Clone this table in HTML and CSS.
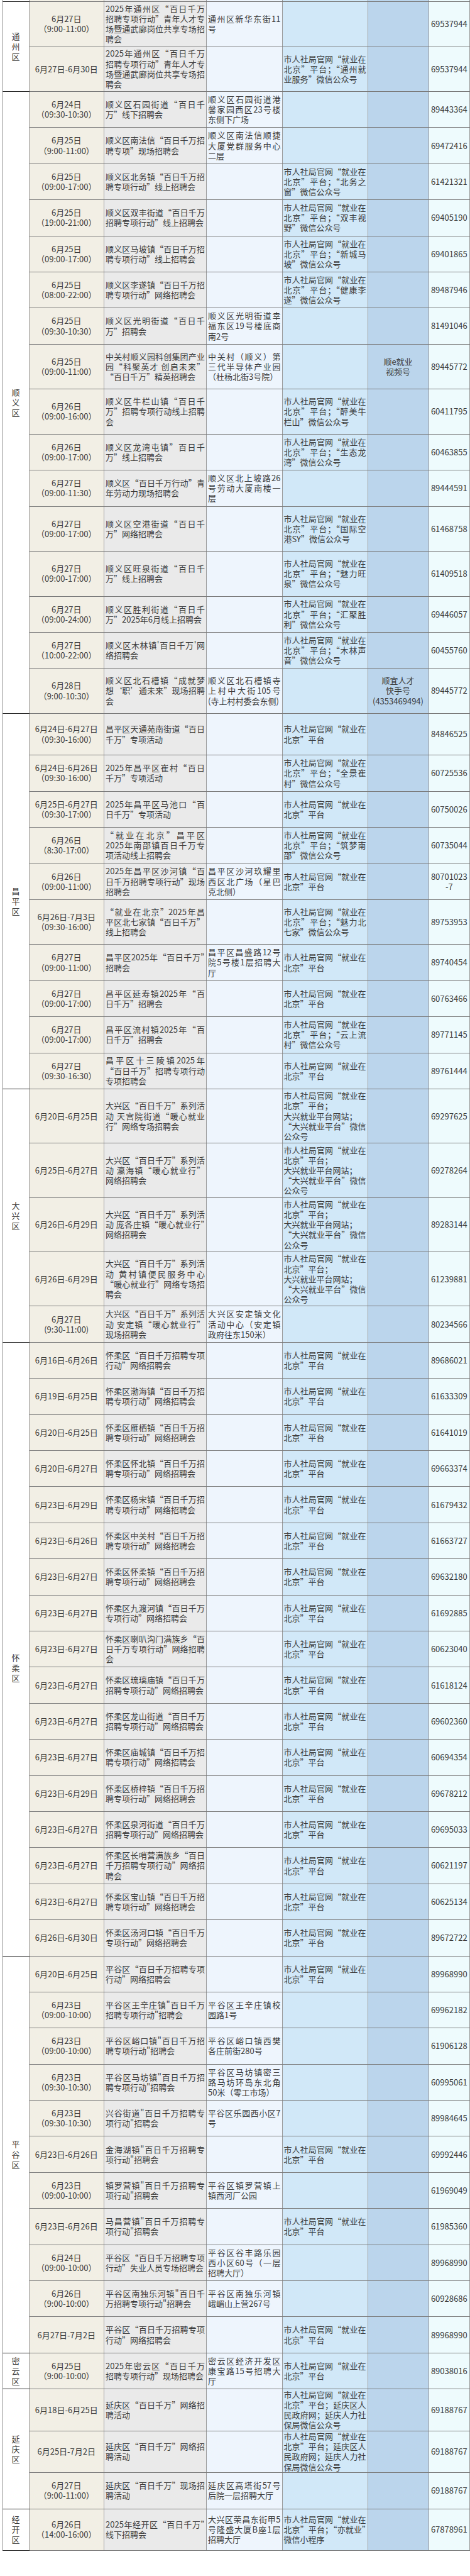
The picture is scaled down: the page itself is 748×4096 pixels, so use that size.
FILE: index.html
```html
<!DOCTYPE html>
<html lang="zh-CN">
<head>
<meta charset="utf-8">
<title>百日千万招聘专项行动</title>
<link rel="stylesheet" href="styles.css">
</head>
<body>
<table class="jobs">
<colgroup>
<col class="w-dist"><col class="w-date"><col class="w-name"><col class="w-addr"><col class="w-plat"><col class="w-vid"><col class="w-tel">
</colgroup>
<tbody>
<tr class="sliver"><td class="c-dist"></td><td class="c-date"></td><td class="c-name"></td><td class="c-addr"></td><td class="c-plat"></td><td class="c-vid"></td><td class="c-tel"></td></tr>

<!-- 通州区 -->
<tr class="r-d"><td class="c-dist" rowspan="2"><span class="vt">通州区</span></td><td class="c-date">6月27日<br>（9:00-11:00）</td><td class="c-name">2025年通州区“百日千万招聘专项行动”青年人才专场暨通武廊岗位共享专场招聘会</td><td class="c-addr">通州区新华东街11号</td><td class="c-plat"></td><td class="c-vid"></td><td class="c-tel">69537944</td></tr>
<tr class="r-d"><td class="c-date">6月27日-6月30日</td><td class="c-name">2025年通州区“百日千万招聘专项行动”青年人才专场暨通武廊岗位共享专场招聘会</td><td class="c-addr"></td><td class="c-plat">市人社局官网“就业在北京”平台；“通州就业服务”微信公众号</td><td class="c-vid"></td><td class="c-tel">69537944</td></tr>

<!-- 顺义区 -->
<tr><td class="c-dist" rowspan="16"><span class="vt">顺义区</span></td><td class="c-date">6月24日<br>（09:30-10:30）</td><td class="c-name">顺义区石园街道“百日千万”线下招聘会</td><td class="c-addr">顺义区石园街道港馨家园西区23号楼东侧下广场</td><td class="c-plat"></td><td class="c-vid"></td><td class="c-tel">89443364</td></tr>
<tr><td class="c-date">6月25日<br>（9:00-11:00）</td><td class="c-name">顺义区南法信“百日千万招聘专项”现场招聘会</td><td class="c-addr">顺义区南法信顺捷大厦党群服务中心二层</td><td class="c-plat"></td><td class="c-vid"></td><td class="c-tel">69472416</td></tr>
<tr><td class="c-date">6月25日<br>（09:00-17:00）</td><td class="c-name">顺义区北务镇“百日千万招聘专项行动”线上招聘会</td><td class="c-addr"></td><td class="c-plat">市人社局官网“就业在北京”平台；“北务之窗”微信公众号</td><td class="c-vid"></td><td class="c-tel">61421321</td></tr>
<tr><td class="c-date">6月25日<br>（19:00-21:00）</td><td class="c-name">顺义区双丰街道“百日千万招聘专项行动”线上招聘会</td><td class="c-addr"></td><td class="c-plat">市人社局官网“就业在北京”平台；“双丰视野”微信公众号</td><td class="c-vid"></td><td class="c-tel">69405190</td></tr>
<tr><td class="c-date">6月25日<br>（09:00-17:00）</td><td class="c-name">顺义区马坡镇“百日千万招聘专项行动”线上招聘会</td><td class="c-addr"></td><td class="c-plat">市人社局官网“就业在北京”平台；“新城马坡”微信公众号</td><td class="c-vid"></td><td class="c-tel">69401865</td></tr>
<tr><td class="c-date">6月25日<br>（08:00-22:00）</td><td class="c-name">顺义区李遂镇“百日千万招聘专项行动”网络招聘会</td><td class="c-addr"></td><td class="c-plat">市人社局官网“就业在北京”平台；“健康李遂”微信公众号</td><td class="c-vid"></td><td class="c-tel">89487946</td></tr>
<tr><td class="c-date">6月25日<br>（09:30-10:30）</td><td class="c-name">顺义区光明街道“百日千万”招聘会</td><td class="c-addr">顺义区光明街道幸福东区19号楼底商南2号</td><td class="c-plat"></td><td class="c-vid"></td><td class="c-tel">81491046</td></tr>
<tr class="r-d"><td class="c-date">6月25日<br>（09:00-11:00）</td><td class="c-name">中关村顺义园科创集团产业园“科聚英才 创启未来”“百日千万”精英招聘会</td><td class="c-addr">中关村（顺义）第三代半导体产业园（杜杨北街3号院）</td><td class="c-plat"></td><td class="c-vid">顺e就业<br>视频号</td><td class="c-tel">89445772</td></tr>
<tr class="r-d"><td class="c-date">6月26日<br>（09:00-16:00）</td><td class="c-name">顺义区牛栏山镇“百日千万”招聘专项行动线上招聘会</td><td class="c-addr"></td><td class="c-plat">市人社局官网“就业在北京”平台；“醉美牛栏山”微信公众号</td><td class="c-vid"></td><td class="c-tel">60411795</td></tr>
<tr><td class="c-date">6月26日<br>（09:00-17:00）</td><td class="c-name">顺义区龙湾屯镇”百日千万”线上招聘会</td><td class="c-addr"></td><td class="c-plat">市人社局官网“就业在北京”平台；“生态龙湾”微信公众号</td><td class="c-vid"></td><td class="c-tel">60463855</td></tr>
<tr><td class="c-date">6月27日<br>（09:00-11:30）</td><td class="c-name">顺义区“百日千万行动”青年劳动力现场招聘会</td><td class="c-addr">顺义区北上坡路26号劳动大厦南楼一层</td><td class="c-plat"></td><td class="c-vid"></td><td class="c-tel">89444591</td></tr>
<tr class="r-d"><td class="c-date">6月27日<br>（09:00-17:00）</td><td class="c-name">顺义区空港街道“百日千万”网络招聘会</td><td class="c-addr"></td><td class="c-plat">市人社局官网“就业在北京”平台；“国际空港SY”微信公众号</td><td class="c-vid"></td><td class="c-tel">61468758</td></tr>
<tr class="r-d"><td class="c-date">6月27日<br>（09:00-17:00）</td><td class="c-name">顺义区旺泉街道“百日千万”线上招聘会</td><td class="c-addr"></td><td class="c-plat">市人社局官网“就业在北京”平台；“魅力旺泉”微信公众号</td><td class="c-vid"></td><td class="c-tel">61409518</td></tr>
<tr><td class="c-date">6月27日<br>（09:00-24:00）</td><td class="c-name">顺义区胜利街道“百日千万”2025年6月线上招聘会</td><td class="c-addr"></td><td class="c-plat">市人社局官网“就业在北京”平台；“汇聚胜利”微信公众号</td><td class="c-vid"></td><td class="c-tel">69446057</td></tr>
<tr><td class="c-date">6月27日<br>（10:00-22:00）</td><td class="c-name">顺义区木林镇'百日千万'网络招聘会</td><td class="c-addr"></td><td class="c-plat">市人社局官网“就业在北京”平台；“木林声音”微信公众号</td><td class="c-vid"></td><td class="c-tel">60455760</td></tr>
<tr class="r-d"><td class="c-date">6月28日<br>（9:00-10:30）</td><td class="c-name">顺义区北石槽镇“成就梦想‘职’通未来”现场招聘会</td><td class="c-addr">顺义区北石槽镇寺上村中大街105号(寺上村村委会东侧)</td><td class="c-plat"></td><td class="c-vid">顺宜人才<br>快手号<br>(4353469494)</td><td class="c-tel">89445772</td></tr>

<!-- 昌平区 -->
<tr class="r-b"><td class="c-dist" rowspan="10"><span class="vt">昌平区</span></td><td class="c-date">6月24日-6月27日<br>（09:30-16:00）</td><td class="c-name">昌平区天通苑南街道“百日千万”专项活动</td><td class="c-addr"></td><td class="c-plat">市人社局官网“就业在北京”平台</td><td class="c-vid"></td><td class="c-tel">84846525</td></tr>
<tr><td class="c-date">6月24日-6月26日<br>（09:30-16:00）</td><td class="c-name">2025年昌平区崔村“百日千万”专项活动</td><td class="c-addr"></td><td class="c-plat">市人社局官网“就业在北京”平台；“全景崔村”微信公众号</td><td class="c-vid"></td><td class="c-tel">60725536</td></tr>
<tr><td class="c-date">6月25日-6月27日<br>（09:30-17:00）</td><td class="c-name">2025年昌平区马池口“百日千万”专项活动</td><td class="c-addr"></td><td class="c-plat">市人社局官网“就业在北京”平台</td><td class="c-vid"></td><td class="c-tel">60750026</td></tr>
<tr><td class="c-date">6月26日<br>（8:30-17:00）</td><td class="c-name">“就业在北京”昌平区2025年南邵镇百日千万专项活动线上招聘会</td><td class="c-addr"></td><td class="c-plat">市人社局官网“就业在北京”平台；“筑梦南邵”微信公众号</td><td class="c-vid"></td><td class="c-tel">60735044</td></tr>
<tr><td class="c-date">6月26日<br>（09:00-11:00）</td><td class="c-name">2025年昌平区沙河镇“百日千万招聘专项行动”现场招聘会</td><td class="c-addr">昌平区沙河玖耀里西区北广场（星巴克北侧）</td><td class="c-plat">市人社局官网“就业在北京”平台</td><td class="c-vid"></td><td class="c-tel">80701023<br>-7</td></tr>
<tr class="r-d"><td class="c-date">6月26日-7月3日<br>（09:30-16:00）</td><td class="c-name">“就业在北京”2025年昌平区北七家镇“百日千万”线上招聘会</td><td class="c-addr"></td><td class="c-plat">市人社局官网“就业在北京”平台；“魅力北七家”微信公众号</td><td class="c-vid"></td><td class="c-tel">89753953</td></tr>
<tr><td class="c-date">6月27日<br>（09:00-11:00）</td><td class="c-name">昌平区2025年“百日千万”招聘会</td><td class="c-addr">昌平区昌盛路12号院5号楼1层招聘大厅</td><td class="c-plat">市人社局官网“就业在北京”平台</td><td class="c-vid"></td><td class="c-tel">89740454</td></tr>
<tr><td class="c-date">6月27日<br>（09:00-17:00）</td><td class="c-name">昌平区延寿镇2025年“百日千万”招聘会</td><td class="c-addr"></td><td class="c-plat">市人社局官网“就业在北京”平台</td><td class="c-vid"></td><td class="c-tel">60763466</td></tr>
<tr><td class="c-date">6月27日<br>（09:00-17:00）</td><td class="c-name">昌平区流村镇2025年“百日千万”招聘会</td><td class="c-addr"></td><td class="c-plat">市人社局官网“就业在北京”平台；“云上流村”微信公众号</td><td class="c-vid"></td><td class="c-tel">89771145</td></tr>
<tr><td class="c-date">6月27日<br>（09:30-16:30）</td><td class="c-name">昌平区十三陵镇2025年“百日千万”招聘专项行动专项招聘会</td><td class="c-addr"></td><td class="c-plat">市人社局官网“就业在北京”平台</td><td class="c-vid"></td><td class="c-tel">89761444</td></tr>

<!-- 大兴区 -->
<tr class="r-e"><td class="c-dist" rowspan="5"><span class="vt">大兴区</span></td><td class="c-date">6月20日-6月25日</td><td class="c-name">大兴区“百日千万”系列活动 天宫院街道“暖心就业行”网络专场招聘会</td><td class="c-addr"></td><td class="c-plat">市人社局官网“就业在北京”平台；<br>大兴就业平台网站；<br>“大兴就业平台”微信公众号</td><td class="c-vid"></td><td class="c-tel">69297625</td></tr>
<tr class="r-e"><td class="c-date">6月25日-6月27日</td><td class="c-name">大兴区“百日千万”系列活动 瀛海镇“暖心就业行”网络招聘会</td><td class="c-addr"></td><td class="c-plat">市人社局官网“就业在北京”平台；<br>大兴就业平台网站；<br>“大兴就业平台”微信公众号</td><td class="c-vid"></td><td class="c-tel">69278264</td></tr>
<tr class="r-e"><td class="c-date">6月26日-6月29日</td><td class="c-name">大兴区“百日千万”系列活动 庞各庄镇“暖心就业行”网络招聘会</td><td class="c-addr"></td><td class="c-plat">市人社局官网“就业在北京”平台；<br>大兴就业平台网站；<br>“大兴就业平台”微信公众号</td><td class="c-vid"></td><td class="c-tel">89283144</td></tr>
<tr class="r-e"><td class="c-date">6月26日-6月29日</td><td class="c-name">大兴区“百日千万”系列活动 黄村镇便民服务中心“暖心就业行”网络专场招聘会</td><td class="c-addr"></td><td class="c-plat">市人社局官网“就业在北京”平台；<br>大兴就业平台网站；<br>“大兴就业平台”微信公众号</td><td class="c-vid"></td><td class="c-tel">61239881</td></tr>
<tr><td class="c-date">6月27日<br>(9:30-11:00)</td><td class="c-name">大兴区“百日千万”系列活动 安定镇“暖心就业行”现场招聘会</td><td class="c-addr">大兴区安定镇文化活动中心（安定镇政府往东150米）</td><td class="c-plat"></td><td class="c-vid"></td><td class="c-tel">80234566</td></tr>

<!-- 怀柔区 -->
<tr><td class="c-dist low" rowspan="17"><span class="vt">怀柔区</span></td><td class="c-date">6月16日-6月26日</td><td class="c-name">怀柔区“百日千万招聘专项行动”网络招聘会</td><td class="c-addr"></td><td class="c-plat">市人社局官网“就业在北京”平台</td><td class="c-vid"></td><td class="c-tel">89686021</td></tr>
<tr><td class="c-date">6月19日-6月25日</td><td class="c-name">怀柔区渤海镇“百日千万招聘专项行动”网络招聘会</td><td class="c-addr"></td><td class="c-plat">市人社局官网“就业在北京”平台</td><td class="c-vid"></td><td class="c-tel">61633309</td></tr>
<tr><td class="c-date">6月20日-6月25日</td><td class="c-name">怀柔区雁栖镇“百日千万招聘专项行动”网络招聘会</td><td class="c-addr"></td><td class="c-plat">市人社局官网“就业在北京”平台</td><td class="c-vid"></td><td class="c-tel">61641019</td></tr>
<tr><td class="c-date">6月20日-6月27日</td><td class="c-name">怀柔区怀北镇“百日千万招聘专项行动”网络招聘会</td><td class="c-addr"></td><td class="c-plat">市人社局官网“就业在北京”平台</td><td class="c-vid"></td><td class="c-tel">69663374</td></tr>
<tr><td class="c-date">6月23日-6月29日</td><td class="c-name">怀柔区杨宋镇“百日千万招聘专项行动”网络招聘会</td><td class="c-addr"></td><td class="c-plat">市人社局官网“就业在北京”平台</td><td class="c-vid"></td><td class="c-tel">61679432</td></tr>
<tr><td class="c-date">6月23日-6月26日</td><td class="c-name">怀柔区中关村“百日千万招聘专项行动”网络招聘会</td><td class="c-addr"></td><td class="c-plat">市人社局官网“就业在北京”平台</td><td class="c-vid"></td><td class="c-tel">61663727</td></tr>
<tr><td class="c-date">6月23日-6月27日</td><td class="c-name">怀柔区怀柔镇“百日千万招聘专项行动”网络招聘会</td><td class="c-addr"></td><td class="c-plat">市人社局官网“就业在北京”平台</td><td class="c-vid"></td><td class="c-tel">69632180</td></tr>
<tr><td class="c-date">6月23日-6月27日</td><td class="c-name">怀柔区九渡河镇“百日千万专项行动”网络招聘会</td><td class="c-addr"></td><td class="c-plat">市人社局官网“就业在北京”平台</td><td class="c-vid"></td><td class="c-tel">61692885</td></tr>
<tr><td class="c-date">6月23日-6月27日</td><td class="c-name">怀柔区喇叭沟门满族乡“百日千万专项行动”网络招聘会</td><td class="c-addr"></td><td class="c-plat">市人社局官网“就业在北京”平台</td><td class="c-vid"></td><td class="c-tel">60623040</td></tr>
<tr><td class="c-date">6月23日-6月27日</td><td class="c-name">怀柔区琉璃庙镇“百日千万招聘专项行动”网络招聘会</td><td class="c-addr"></td><td class="c-plat">市人社局官网“就业在北京”平台</td><td class="c-vid"></td><td class="c-tel">61618124</td></tr>
<tr><td class="c-date">6月23日-6月27日</td><td class="c-name">怀柔区龙山街道“百日千万招聘专项行动”网络招聘会</td><td class="c-addr"></td><td class="c-plat">市人社局官网“就业在北京”平台</td><td class="c-vid"></td><td class="c-tel">69602360</td></tr>
<tr><td class="c-date">6月23日-6月27日</td><td class="c-name">怀柔区庙城镇“百日千万招聘专项行动”网络招聘会</td><td class="c-addr"></td><td class="c-plat">市人社局官网“就业在北京”平台</td><td class="c-vid"></td><td class="c-tel">60694354</td></tr>
<tr><td class="c-date">6月23日-6月29日</td><td class="c-name">怀柔区桥梓镇“百日千万招聘专项行动”网络招聘会</td><td class="c-addr"></td><td class="c-plat">市人社局官网“就业在北京”平台</td><td class="c-vid"></td><td class="c-tel">69678212</td></tr>
<tr><td class="c-date">6月23日-6月27日</td><td class="c-name">怀柔区泉河街道“百日千万招聘专项行动”网络招聘会</td><td class="c-addr"></td><td class="c-plat">市人社局官网“就业在北京”平台</td><td class="c-vid"></td><td class="c-tel">69695033</td></tr>
<tr><td class="c-date">6月23日-6月27日</td><td class="c-name">怀柔区长哨营满族乡“百日千万招聘专项行动”网络招聘会</td><td class="c-addr"></td><td class="c-plat">市人社局官网“就业在北京”平台</td><td class="c-vid"></td><td class="c-tel">60621197</td></tr>
<tr><td class="c-date">6月23日-6月27日</td><td class="c-name">怀柔区宝山镇“百日千万招聘专项行动”网络招聘会</td><td class="c-addr"></td><td class="c-plat">市人社局官网“就业在北京”平台</td><td class="c-vid"></td><td class="c-tel">60625134</td></tr>
<tr><td class="c-date">6月26日-6月30日</td><td class="c-name">怀柔区汤河口镇“百日千万专项行动”网络招聘会</td><td class="c-addr"></td><td class="c-plat">市人社局官网“就业在北京”平台</td><td class="c-vid"></td><td class="c-tel">89672722</td></tr>

<!-- 平谷区 -->
<tr><td class="c-dist" rowspan="11"><span class="vt">平谷区</span></td><td class="c-date">6月20日-6月25日</td><td class="c-name">平谷区“百日千万招聘专项行动”网络招聘会</td><td class="c-addr"></td><td class="c-plat">市人社局官网“就业在北京”平台</td><td class="c-vid"></td><td class="c-tel">89968990</td></tr>
<tr><td class="c-date">6月23日<br>（09:00-10:00）</td><td class="c-name">平谷区王辛庄镇"百日千万招聘专项行动"招聘会</td><td class="c-addr">平谷区王辛庄镇校园路1号</td><td class="c-plat"></td><td class="c-vid"></td><td class="c-tel">69962182</td></tr>
<tr><td class="c-date">6月23日<br>（09:00-10:00）</td><td class="c-name">平谷区峪口镇"百日千万招聘专项行动"招聘会</td><td class="c-addr">平谷区峪口镇西樊各庄前街280号</td><td class="c-plat"></td><td class="c-vid"></td><td class="c-tel">61906128</td></tr>
<tr><td class="c-date">6月23日<br>（09:30-10:30）</td><td class="c-name">平谷区马坊镇"百日千万招聘专项行动"招聘会</td><td class="c-addr">平谷区马坊镇密三路马坊环岛东北角50米（零工市场）</td><td class="c-plat"></td><td class="c-vid"></td><td class="c-tel">60995061</td></tr>
<tr><td class="c-date">6月23日<br>（09:30-10:30）</td><td class="c-name">兴谷街道"百日千万招聘专项行动"招聘会</td><td class="c-addr">平谷区乐园西小区7号</td><td class="c-plat"></td><td class="c-vid"></td><td class="c-tel">89984645</td></tr>
<tr><td class="c-date">6月23日-6月26日</td><td class="c-name">金海湖镇"百日千万招聘专项行动"招聘会</td><td class="c-addr"></td><td class="c-plat">市人社局官网“就业在北京”平台</td><td class="c-vid"></td><td class="c-tel">69992446</td></tr>
<tr><td class="c-date">6月23日<br>（09:00-10:00）</td><td class="c-name">镇罗营镇"百日千万招聘专项行动"招聘会</td><td class="c-addr">平谷区镇罗营镇上镇西河厂公园</td><td class="c-plat"></td><td class="c-vid"></td><td class="c-tel">61969049</td></tr>
<tr><td class="c-date">6月23日-6月26日</td><td class="c-name">马昌营镇"百日千万招聘专项行动"招聘会</td><td class="c-addr"></td><td class="c-plat">市人社局官网“就业在北京”平台</td><td class="c-vid"></td><td class="c-tel">61985360</td></tr>
<tr><td class="c-date">6月24日<br>（09:00-10:00）</td><td class="c-name">平谷区“百日千万招聘专项行动”失业人员专场招聘会</td><td class="c-addr">平谷区谷丰路乐园西小区60号（一层招聘大厅）</td><td class="c-plat"></td><td class="c-vid"></td><td class="c-tel">89968990</td></tr>
<tr><td class="c-date">6月26日<br>（9:00-10:00）</td><td class="c-name">平谷区南独乐河镇"百日千万招聘专项行动"招聘会</td><td class="c-addr">平谷区南独乐河镇峨嵋山上营267号</td><td class="c-plat"></td><td class="c-vid"></td><td class="c-tel">60928686</td></tr>
<tr><td class="c-date">6月27日-7月2日</td><td class="c-name">平谷区“百日千万招聘专项行动”网络招聘会</td><td class="c-addr"></td><td class="c-plat">市人社局官网“就业在北京”平台</td><td class="c-vid"></td><td class="c-tel">89968990</td></tr>

<!-- 密云区 -->
<tr><td class="c-dist" rowspan="1"><span class="vt">密云区</span></td><td class="c-date">6月25日<br>（9:00-10:00）</td><td class="c-name">2025年密云区“百日千万招聘专项行动”现场招聘会</td><td class="c-addr">密云区经济开发区康宝路15号招聘大厅</td><td class="c-plat">市人社局官网“就业在北京”平台</td><td class="c-vid"></td><td class="c-tel">89038016</td></tr>

<!-- 延庆区 -->
<tr class="r-b"><td class="c-dist" rowspan="3"><span class="vt">延庆区</span></td><td class="c-date">6月18日-6月25日</td><td class="c-name">延庆区“百日千万”网络招聘活动</td><td class="c-addr"></td><td class="c-plat">市人社局官网“就业在北京”平台；延庆区人民政府网；延庆人力社保局微信公众号</td><td class="c-vid"></td><td class="c-tel">69188767</td></tr>
<tr class="r-b"><td class="c-date">6月25日-7月2日</td><td class="c-name">延庆区“百日千万”网络招聘活动</td><td class="c-addr"></td><td class="c-plat">市人社局官网“就业在北京”平台；延庆区人民政府网；延庆人力社保局微信公众号</td><td class="c-vid"></td><td class="c-tel">69188767</td></tr>
<tr><td class="c-date">6月27日<br>（9:00-11:00）</td><td class="c-name">延庆区“百日千万”现场招聘活动</td><td class="c-addr">延庆区高塔街57号后院一层招聘大厅</td><td class="c-plat"></td><td class="c-vid"></td><td class="c-tel">69188767</td></tr>

<!-- 经开区 -->
<tr class="r-b"><td class="c-dist" rowspan="1"><span class="vt">经开区</span></td><td class="c-date">6月26日<br>（14:00-16:00）</td><td class="c-name">2025年经开区“百日千万”线下招聘会</td><td class="c-addr">大兴区荣昌东街甲5号隆盛大厦B座1层招聘大厅</td><td class="c-plat">市人社局官网“就业在北京”平台；“亦就业”微信小程序</td><td class="c-vid"></td><td class="c-tel">67878961</td></tr>
</tbody>
</table>
</body>
</html>
```

FILE: styles.css
```css
html, body {
  margin: 0;
  padding: 0;
  background: #ffffff;
}

body {
  font-family: "Noto Sans CJK SC", "Noto Sans", sans-serif;
  font-size: 13px;
  line-height: 16.15px;
  color: #3a3a3a;
}

.jobs {
  margin: 0 0 0 3.5px;
  width: 743.5px;
  table-layout: fixed;
  border-collapse: collapse;
}

.w-dist { width: 42px; }
.w-date { width: 119.5px; }
.w-name { width: 163px; }
.w-addr { width: 120.5px; }
.w-plat { width: 136px; }
.w-vid  { width: 97px; }
.w-tel  { width: 65.5px; }

.jobs td {
  padding: 0 2px;
  vertical-align: middle;
  border-top: 1px solid #7a7a7a;
  border-bottom: 1px solid #7a7a7a;
  border-left: 1px solid #9a9a9a;
  border-right: 1px solid #9a9a9a;
  overflow: hidden;
}

.jobs tr { height: 57.4px; }
.jobs tr.r-b { height: 66.5px; }
.jobs tr.r-d { height: 71.5px; }
.jobs tr.r-e { height: 86.4px; }

.jobs tr.sliver { height: 2px; }
.jobs tr.sliver td {
  font-size: 0;
  line-height: 0;
  padding: 0;
  height: 2px;
  border-top: 0;
}

.c-dist {
  background: #ffffff;
  text-align: center;
  border-left-color: #8a8a8a !important;
  border-top-color: #2a2a2a !important;
  border-bottom-color: #2a2a2a !important;
}

.c-dist.low { padding-top: 60px !important; }

.vt {
  display: inline-block;
  width: 1em;
  line-height: 16.15px;
}

.c-date {
  background: #f2efe5;
  text-align: center;
}

.c-name {
  background: #eaeaea;
  text-align: justify;
}

.c-addr {
  background: #eef5fd;
  text-align: justify;
}

.c-plat {
  background: #d1e8f8;
  text-align: justify;
}

.c-vid {
  background: #bbd5ec;
  text-align: center;
}

.c-tel {
  background: #eefbfd;
  text-align: center;
}
```
